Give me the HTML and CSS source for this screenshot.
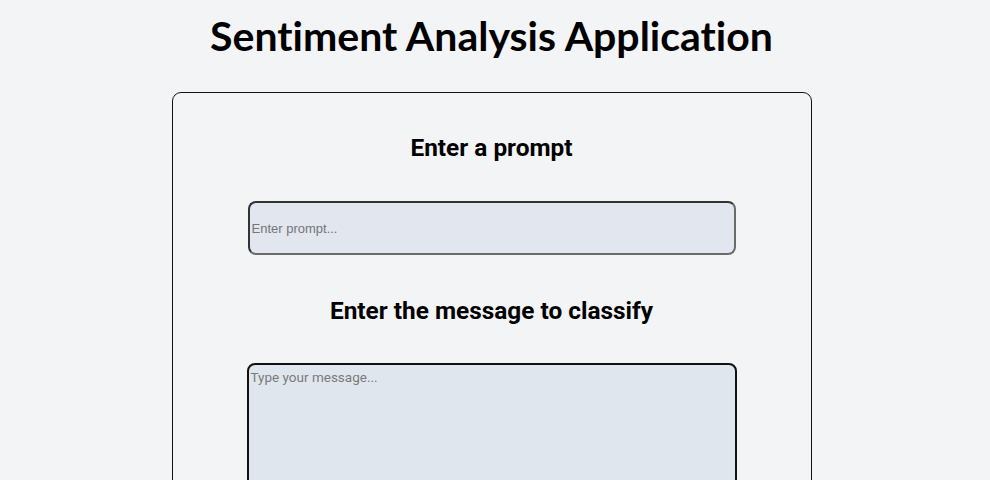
FILE: index.html
```html
<!DOCTYPE html>
<html lang="en">
<head>
<meta charset="utf-8">
<title>Sentiment Analysis Application</title>
<link rel="stylesheet" href="styles.css">
</head>
<body>
<main class="page">
  <h1 class="title">Sentiment Analysis Application</h1>
  <section class="card">
    <h2 class="label">Enter a prompt</h2>
    <input class="prompt" type="text" placeholder="Enter prompt...">
    <h2 class="label">Enter the message to classify</h2>
    <textarea class="message" placeholder="Type your message..."></textarea>
  </section>
</main>
</body>
</html>
```
FILE: styles.css
```css
html, body {
  margin: 0;
  padding: 0;
  background: #f3f4f6;
}
body {
  font-family: Lato, "Noto Sans", "Liberation Sans", sans-serif;
  color: #000;
  overflow: hidden;
}
.page {
  display: flex;
  flex-direction: column;
  align-items: center;
  padding-right: 7px;
}
.title {
  margin: 12px 0 0;
  font-size: 41px;
  line-height: 48px;
  font-weight: 700;
  font-variant-ligatures: none;
}
.card {
  margin-top: 32px;
  width: 640px;
  box-sizing: border-box;
  border: 1px solid #111;
  border-radius: 9px;
  display: flex;
  flex-direction: column;
  align-items: center;
  padding: 40px 0 40px;
}
.label {
  margin: 0;
  font-family: Roboto, "Liberation Sans", sans-serif;
  font-size: 24.4px;
  line-height: 30px;
  font-weight: 700;
}
.prompt {
  flex-shrink: 0;
  margin: 38px 0 41px;
  width: 488px;
  height: 54px;
  box-sizing: border-box;
  background: #e2e6ee;
  border: 2px solid #333;
  border-bottom-color: #6b6b6b;
  border-right-color: #6b6b6b;
  border-radius: 8px;
  padding: 0 2px;
  font-family: "Liberation Sans", sans-serif;
  font-size: 13px;
}
.prompt::placeholder {
  color: #757575;
}
.message {
  flex-shrink: 0;
  margin-top: 37px;
  width: 490px;
  height: 200px;
  box-sizing: border-box;
  background: #e0e6ee;
  border: 2px solid #111;
  border-radius: 8px;
  padding: 4px 2px 2px;
  resize: none;
  font-family: Roboto, "Liberation Sans", sans-serif;
  font-size: 13.5px;
}
.message::placeholder {
  color: #7a7a7a;
}
```
